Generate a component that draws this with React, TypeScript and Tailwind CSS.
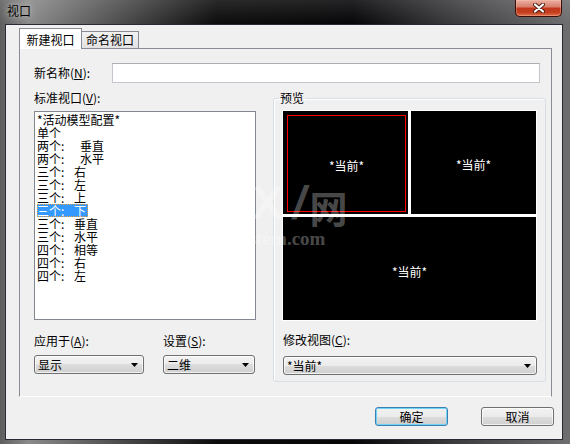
import React from "react";

type Item = { a: string; b?: string; w?: string; sel?: boolean };

const items: Item[] = [
  { a: "*活动模型配置*" },
  { a: "单个" },
  { a: "两个:", b: "垂直", w: "w-[43px]" },
  { a: "两个:", b: "水平", w: "w-[43px]" },
  { a: "三个:", b: "右", w: "w-[37px]" },
  { a: "三个:", b: "左", w: "w-[37px]" },
  { a: "三个:", b: "上", w: "w-[37px]" },
  { a: "三个:", b: "下", w: "w-[37px]", sel: true },
  { a: "三个:", b: "垂直", w: "w-[37px]" },
  { a: "三个:", b: "水平", w: "w-[37px]" },
  { a: "四个:", b: "相等", w: "w-[37px]" },
  { a: "四个:", b: "右", w: "w-[37px]" },
  { a: "四个:", b: "左", w: "w-[37px]" },
];

function Combo({ w, text }: { w: string; text: string }) {
  return (
    <div
      className={`${w} h-[19px] rounded-[3px] border border-[#707070] bg-[linear-gradient(#f3f3f3_0%,#ebebeb_50%,#dddddd_50%,#cfcfcf_100%)] shadow-[inset_0_0_0_1px_rgba(255,255,255,0.7)] flex items-center pl-[3px] pr-[5px] text-[12px] leading-[14px] text-black`}
    >
      <span className="flex-1">{text}</span>
      <svg width="7" height="4" viewBox="0 0 7 4">
        <path d="M0 0H7L3.5 4Z" fill="#000" />
      </svg>
    </div>
  );
}

function Btn({ text, def }: { text: string; def?: boolean }) {
  return (
    <div
      className={
        def
          ? "w-[73px] h-[19px] rounded-[3px] border border-[#3c7fb1] bg-[linear-gradient(#f2f2f2_0%,#ebebeb_50%,#dddddd_50%,#cfcfcf_100%)] shadow-[inset_0_0_0_1px_#6fd3f7] flex items-center justify-center text-[12px] leading-[14px] text-black"
          : "w-[73px] h-[19px] rounded-[3px] border border-[#707070] bg-[linear-gradient(#f2f2f2_0%,#ebebeb_50%,#dddddd_50%,#cfcfcf_100%)] shadow-[inset_0_0_0_1px_rgba(255,255,255,0.7)] flex items-center justify-center text-[12px] leading-[14px] text-black"
      }
    >
      {text}
    </div>
  );
}

function Label({ pre, k }: { pre: string; k: string }) {
  return (
    <span className="whitespace-pre">
      {pre}(<span className="underline">{k}</span>):
    </span>
  );
}

export default function App() {
  return (
    <div className="relative w-[570px] h-[444px] overflow-hidden flex flex-col font-['Noto_Sans_CJK_SC','Liberation_Sans',sans-serif] text-black bg-[linear-gradient(90deg,#5e5e5e_0%,#8a8a8a_5%,#505050_20%,#0c0c0c_38%,#060608_62%,#3c3c3e_80%,#6e6e70_100%)]">
      {/* title bar */}
      <div className="h-[24px] flex items-start justify-between pl-[7px] pr-[8px] bg-[linear-gradient(rgba(255,255,255,0.12),rgba(255,255,255,0))]">
        <span className="mt-[4px] text-[12px] leading-[14px] text-black [text-shadow:0_0_6px_rgba(255,255,255,0.8)]">
          视口
        </span>
        <div className="w-[47px] h-[17px] rounded-b-[5px] border border-t-0 border-[#3a0d06] bg-[linear-gradient(#eab0a2_0%,#d8806c_42%,#c3361c_52%,#c4401f_78%,#e0704a_100%)] shadow-[inset_0_0_0_1px_rgba(255,200,180,0.35)] flex items-center justify-center">
          <svg width="12" height="10" viewBox="0 0 12 10">
            <path d="M2 1.5L10 8.5M10 1.5L2 8.5" stroke="#4a1a10" strokeWidth="4" strokeLinecap="round" />
            <path d="M2 1.5L10 8.5M10 1.5L2 8.5" stroke="#ffffff" strokeWidth="2.2" strokeLinecap="round" />
          </svg>
        </div>
      </div>

      {/* client */}
      <div className="ml-[5px] w-[558px] h-[416px] border border-[#2a2a34] bg-[#f0f0f0] flex flex-col pt-[3px] pl-[13px]">
        {/* tabs */}
        <div className="relative z-10 h-[21px] -mb-[1px] flex items-end text-[12px] leading-[14px]">
          <div className="h-[21px] w-[63px] border border-b-0 border-[#898c95] bg-white flex items-start justify-center pt-[4px]">
            新建视口
          </div>
          <div className="h-[17px] mb-[1px] w-[57px] border border-l-0 border-b-0 border-[#898c95] bg-[linear-gradient(#f2f2f2,#e2e2e2)] flex items-start justify-center pt-[1px]">
            命名视口
          </div>
        </div>

        {/* panel */}
        <div className="w-[533px] h-[349px] border border-[#898c95] border-b-white bg-[#f0f0f0] pt-[14px] pl-[14px] text-[12px] leading-[14px]">
          <div className="flex items-center">
            <div className="w-[78px]">
              <Label pre="新名称" k="N" />
            </div>
            <div className="w-[428px] h-[20px] border border-[#c3c6cc] border-t-[#abadb3] bg-white" />
          </div>

          <div className="mt-[8px] flex items-start">
            {/* left column */}
            <div className="w-[222px] flex flex-col">
              <div className="h-[14px]">
                <Label pre="标准视口" k="V" />
              </div>
              <div className="mt-[6px] h-[209px] w-[222px] border border-[#828790] bg-white pt-[1px] flex flex-col">
                {items.map((it, i) => (
                  <div key={i} className="h-[13px] pl-[2px] flex items-center leading-[13px]">
                    <span
                      className={
                        it.sel
                          ? "h-[13px] inline-flex items-center bg-[#3399ff] text-white pr-[2px] outline outline-1 outline-dotted outline-[#f0a040] -outline-offset-1"
                          : "h-[13px] inline-flex items-center"
                      }
                    >
                      {it.b ? (
                        <>
                          <span className={`${it.w} inline-block whitespace-pre`}>{it.a}</span>
                          <span>{it.b}</span>
                        </>
                      ) : (
                        <span>{it.a}</span>
                      )}
                    </span>
                  </div>
                ))}
              </div>
              <div className="mt-[14px] h-[14px] flex">
                <div className="w-[129px]">
                  <Label pre="应用于" k="A" />
                </div>
                <div>
                  <Label pre="设置" k="S" />
                </div>
              </div>
              <div className="mt-[7px] flex gap-[19px]">
                <Combo w="w-[110px]" text="显示" />
                <Combo w="w-[92px]" text="二维" />
              </div>
            </div>

            {/* right column */}
            <fieldset className="ml-[17px] w-[273px] border border-[#d5dfe5] rounded-[3px] pl-[8px] pr-[8px] pt-[5px] pb-[6px] shadow-[inset_1px_1px_0_#ffffff]">
              <legend className="-ml-[3px] px-[1px] h-[14px] leading-[14px]">预览</legend>
              <div className="w-[255px] h-[211px] bg-white p-[1px] flex flex-col gap-[3px]">
                <div className="h-[103px] flex gap-[3px]">
                  <div className="w-[125px] h-[103px] bg-black pt-[4px] pl-[4px] pr-[2px] pb-[2px]">
                    <div className="w-full h-full border border-solid border-[#ff0000] flex items-center justify-center pt-[5px] text-white">
                      *当前*
                    </div>
                  </div>
                  <div className="w-[125px] h-[103px] bg-black flex items-center justify-center pt-[5px] text-white">
                    *当前*
                  </div>
                </div>
                <div className="h-[103px] bg-black flex items-center justify-center pt-[6px] text-white">
                  *当前*
                </div>
              </div>
              <div className="mt-[12px] ml-[1px] h-[14px]">
                <Label pre="修改视图" k="C" />
              </div>
              <div className="mt-[9px] ml-[1px]">
                <Combo w="w-[254px]" text="*当前*" />
              </div>
            </fieldset>
          </div>
        </div>

        {/* buttons */}
        <div className="mt-[10px] flex justify-end gap-[33px] pr-[8px]">
          <Btn text="确定" def />
          <Btn text="取消" />
        </div>
      </div>

      {/* watermark */}
      <div className="pointer-events-none absolute left-[252px] top-[180px] text-white/30 font-bold leading-none">
        <div className="flex items-end">
          <span className="text-[46px] font-['Liberation_Sans',sans-serif] leading-none">X</span>
          <span className="ml-[10px] text-[46px] font-['Liberation_Sans',sans-serif] leading-none italic">/</span>
          <span className="ml-[4px] text-[38px] leading-none">网</span>
        </div>
      </div>
      <div className="pointer-events-none absolute left-[232px] top-[229px] text-white/30 font-bold text-[19px] leading-none font-['Liberation_Serif',serif]">
        system.com
      </div>
    </div>
  );
}
